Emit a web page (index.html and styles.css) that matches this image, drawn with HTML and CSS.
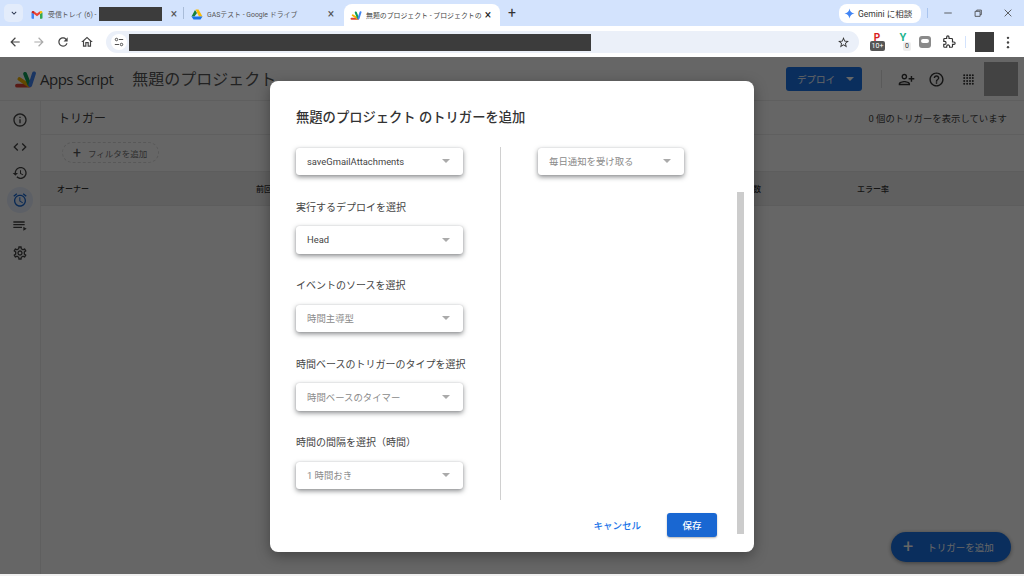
FILE: index.html
```html
<!DOCTYPE html>
<html lang="ja">
<head>
<meta charset="UTF-8">
<title>無題のプロジェクト - プロジェクトのトリガー</title>
<link rel="stylesheet" href="styles.css">
</head>
<body>
<svg class="defs" width="0" height="0">
<defs>
<symbol id="as-logo" viewBox="0 0 24 18">
<g fill="none" stroke-width="4" stroke-linecap="round">
<path stroke="#db4437" d="M3 15.5H16"/>
<path stroke="#f4b400" d="M5.5 8.5L15 15"/>
<path stroke="#0f9d58" d="M11.5 3L16 14"/>
<path stroke="#4285f4" d="M21 2.5L17 15"/>
</g>
</symbol>
<linearGradient id="gem" x1="0" y1="0" x2="1" y2="1">
<stop offset="0" stop-color="#ea4335"/>
<stop offset=".3" stop-color="#4285f4"/>
<stop offset=".7" stop-color="#4285f4"/>
<stop offset="1" stop-color="#fbbc04"/>
</linearGradient>
</defs>
</svg>

<div class="tabstrip">
<button class="tab-search"><svg width="10" height="10" viewBox="0 0 24 24"><path d="M7.4 8.6L12 13.2l4.6-4.6L18 10l-6 6-6-6z" fill="#1f2a44"/></svg></button>
<div class="tab tab-gmail">
<svg class="favicon" viewBox="0 0 24 18"><path fill="#4285f4" d="M1 5v11a1.500 1.500 0 0 0 1.500 1.500H6V8z"/><path fill="#34a853" d="M18 8v9.500h3.500A1.500 1.500 0 0 0 23 16V5z"/><path fill="#ea4335" d="M6 8V2.500L12 7l6-4.500V8l-6 4.500z"/><path fill="#c5221f" d="M1 5c0-3 3-4 5-2.500V8z"/><path fill="#fbbc04" d="M23 5c0-3-3-4-5-2.500V8z"/></svg>
<span class="tab-title">受信トレイ (6) -</span>
<span class="redact tab-redact"></span>
<span class="tab-close">×</span>
</div>
<span class="tab-sep"></span>
<div class="tab tab-drive">
<svg class="favicon" viewBox="0 0 24 22"><path fill="#188038" d="M8 2L1 15h6l5-7z"/><path fill="#fbbc04" d="M9 1h6l8 14h-7z"/><path fill="#1a73e8" d="M1 15h22l-4 6H5z"/></svg>
<span class="tab-title">GASテスト - Google ドライブ</span>
<span class="tab-close">×</span>
</div>
<div class="tab tab-active">
<svg class="favicon" viewBox="0 0 24 18"><use href="#as-logo"/></svg>
<span class="tab-title">無題のプロジェクト - プロジェクトの</span>
<span class="tab-close dark">×</span>
</div>
<span class="new-tab">+</span>
<div class="strip-right">
<div class="gemini">
<svg width="11" height="11" viewBox="0 0 24 24"><path fill="url(#gem)" d="M12 1c.6 6 5 10.400 11 11-6 .6-10.400 5-11 11-.6-6-5-10.400-11-11 6-.6 10.400-5 11-11z"/></svg>
<span>Gemini に相談</span>
</div>
<span class="strip-sep"></span>
<div class="win-btns">
<svg viewBox="0 0 12 12"><path d="M1.500 6h9" stroke="#444" stroke-width="1"/></svg>
<svg viewBox="0 0 12 12"><path d="M2.500 4h6v6h-6zM4.500 4V2.500h5.500V8H8.500" fill="none" stroke="#444" stroke-width="1"/></svg>
<svg viewBox="0 0 12 12"><path d="M2 2l8 8M10 2l-8 8" stroke="#444" stroke-width="1"/></svg>
</div>
</div>
</div>

<div class="toolbar">
<div class="nav-btns">
<svg viewBox="0 0 24 24"><path fill="#444" d="M20 11H7.830l5.590-5.590L12 4l-8 8 8 8 1.410-1.410L7.830 13H20v-2z"/></svg>
<svg viewBox="0 0 24 24"><path fill="#aaa" d="M12 4l-1.410 1.410L16.170 11H4v2h12.170l-5.580 5.590L12 20l8-8z"/></svg>
<svg viewBox="0 0 24 24"><path fill="#444" d="M17.650 6.350C16.200 4.900 14.210 4 12 4c-4.420 0-7.990 3.580-7.990 8s3.570 8 7.990 8c3.730 0 6.840-2.550 7.730-6h-2.080c-.82 2.330-3.040 4-5.650 4-3.310 0-6-2.690-6-6s2.690-6 6-6c1.660 0 3.140.69 4.220 1.780L13 11h7V4l-2.350 2.350z"/></svg>
<svg viewBox="0 0 24 24"><path fill="#444" d="M12 5.690l5 4.500V18h-2v-6H9v6H7v-7.810l5-4.500M12 3L2 12h3v8h6v-6h2v6h6v-8h3L12 3z"/></svg>
</div>
<div class="omnibox">
<span class="site-info"><svg width="10" height="10" viewBox="0 0 12 12"><g fill="none" stroke="#333" stroke-width="1"><circle cx="3" cy="3" r="1.500"/><path d="M6 3h5M1 9h5"/><circle cx="9" cy="9" r="1.500"/></g></svg></span>
<span class="redact url-redact"></span>
<svg class="star" viewBox="0 0 24 24"><path fill="#333" d="M22 9.240l-7.190-.62L12 2 9.190 8.630 2 9.240l5.460 4.730L5.820 21 12 17.270 18.180 21l-1.630-7.030L22 9.240zM12 15.400l-3.760 2.270 1-4.280-3.320-2.880 4.380-.38L12 6.100l1.710 4.040 4.380.38-3.320 2.880 1 4.280L12 15.400z"/></svg>
</div>
<div class="ext-btns">
<div class="ext ext-p"><span class="ext-letter">P</span><span class="badge">10+</span></div>
<div class="ext ext-y"><span class="ext-letter">Y</span><span class="badge light">0</span></div>
<div class="ext ext-line"><span class="line-bubble"></span></div>
<svg class="ext-puzzle" viewBox="0 0 24 24"><path fill="none" stroke="#333" stroke-width="2" d="M20.500 12H18V7.500c0-.8-.7-1.500-1.500-1.500H12V3.500a2 2 0 0 0-4 0V6H4.500C3.700 6 3 6.700 3 7.500V11h1.500a2.500 2.500 0 0 1 0 5H3v3.500c0 .8.700 1.500 1.500 1.500H8v-1.500a2.500 2.500 0 0 1 5 0V21h3.500c.8 0 1.500-.7 1.500-1.500V16h2.500a2 2 0 0 0 0-4z"/></svg>
</div>
<span class="tool-sep"></span>
<span class="redact profile"></span>
<svg class="kebab" viewBox="0 0 4 14"><circle cx="2" cy="2" r="1.300"/><circle cx="2" cy="7" r="1.300"/><circle cx="2" cy="12" r="1.300"/></svg>
</div>

<div class="app">
<header class="app-header">
<svg class="logo" viewBox="0 0 24 18"><use href="#as-logo"/></svg>
<span class="app-name">Apps Script</span>
<span class="project-name">無題のプロジェクト</span>
<div class="header-right">
<button class="deploy">デプロイ<span class="deploy-caret"></span></button>
<span class="header-sep"></span>
<svg class="hd-icon person" viewBox="0 0 24 24"><path fill="#333" transform="matrix(-1 0 0 1 24 0)" d="M15 12c2.210 0 4-1.790 4-4s-1.790-4-4-4-4 1.790-4 4 1.790 4 4 4zm0-6c1.100 0 2 .9 2 2s-.9 2-2 2-2-.9-2-2 .9-2 2-2zm0 8c-2.670 0-8 1.340-8 4v2h16v-2c0-2.660-5.330-4-8-4zm-6 4c.22-.72 3.310-2 6-2 2.700 0 5.800 1.290 6 2H9zm-3-3v-3h3v-2H6V7H4v3H1v2h3v3h2z"/></svg>
<svg class="hd-icon help" viewBox="0 0 24 24"><path fill="#333" d="M11 18h2v-2h-2v2zm1-16C6.480 2 2 6.480 2 12s4.480 10 10 10 10-4.480 10-10S17.520 2 12 2zm0 18c-4.410 0-8-3.590-8-8s3.590-8 8-8 8 3.590 8 8-3.590 8-8 8zm0-14c-2.210 0-4 1.790-4 4h2c0-1.100.9-2 2-2s2 .9 2 2c0 2-3 1.750-3 5h2c0-2.250 3-2.500 3-5 0-2.210-1.790-4-4-4z"/></svg>
<svg class="hd-icon grid" viewBox="0 0 11 11"><g fill="#333"><circle cx="1.200" cy="1.200" r="1"/><circle cx="4.100" cy="1.200" r="1"/><circle cx="7" cy="1.200" r="1"/><circle cx="9.800" cy="1.200" r="1"/><circle cx="1.200" cy="4.100" r="1"/><circle cx="4.100" cy="4.100" r="1"/><circle cx="7" cy="4.100" r="1"/><circle cx="9.800" cy="4.100" r="1"/><circle cx="1.200" cy="7" r="1"/><circle cx="4.100" cy="7" r="1"/><circle cx="7" cy="7" r="1"/><circle cx="9.800" cy="7" r="1"/><circle cx="1.200" cy="9.800" r="1"/><circle cx="4.100" cy="9.800" r="1"/><circle cx="7" cy="9.800" r="1"/><circle cx="9.800" cy="9.800" r="1"/></g></svg>
<span class="account"></span>
</div>
</header>
<div class="app-body">
<nav class="sidebar">
<span class="side-item"><svg viewBox="0 0 24 24"><path d="M11 7h2v2h-2zm0 4h2v6h-2zm1-9C6.480 2 2 6.480 2 12s4.480 10 10 10 10-4.480 10-10S17.520 2 12 2zm0 18c-4.410 0-8-3.590-8-8s3.590-8 8-8 8 3.590 8 8-3.590 8-8 8z"/></svg></span>
<span class="side-item"><svg viewBox="0 0 24 24"><path d="M9.400 16.600L4.800 12l4.600-4.600L8 6l-6 6 6 6 1.400-1.400zm5.200 0l4.600-4.600-4.600-4.600L16 6l6 6-6 6-1.400-1.400z"/></svg></span>
<span class="side-item"><svg viewBox="0 0 24 24"><path d="M13 3c-4.970 0-9 4.030-9 9H1l3.890 3.890.07.14L9 12H6c0-3.870 3.130-7 7-7s7 3.130 7 7-3.130 7-7 7c-1.930 0-3.680-.79-4.940-2.060l-1.420 1.420C8.270 19.990 10.510 21 13 21c4.970 0 9-4.030 9-9s-4.030-9-9-9zm-1 5v5l4.280 2.540.72-1.210-3.500-2.080V8H12z"/></svg></span>
<span class="side-item active"><svg viewBox="0 0 24 24"><path d="M22 5.720l-4.600-3.860-1.290 1.530 4.600 3.860L22 5.720zM7.880 3.390L6.600 1.860 2 5.710l1.290 1.530 4.590-3.850zM12.500 8H11v6l4.750 2.850.75-1.230-4-2.370V8zM12 4c-4.970 0-9 4.030-9 9s4.020 9 9 9c4.970 0 9-4.030 9-9s-4.030-9-9-9zm0 16c-3.870 0-7-3.130-7-7s3.130-7 7-7 7 3.130 7 7-3.130 7-7 7z"/></svg></span>
<span class="side-item"><svg viewBox="0 0 24 24"><path d="M19 9H2v2h17V9zm0-4H2v2h17V5zM2 15h13v-2H2v2zm15-2v6l5-3-5-3z"/></svg></span>
<span class="side-item"><svg viewBox="0 0 24 24"><path d="M19.430 12.980c.04-.32.07-.64.07-.98 0-.34-.03-.66-.07-.98l2.110-1.650c.19-.15.24-.42.12-.64l-2-3.460c-.09-.16-.26-.25-.44-.25-.06 0-.12.01-.17.03l-2.490 1c-.52-.4-1.080-.73-1.690-.98l-.38-2.650C14.460 2.180 14.250 2 14 2h-4c-.25 0-.46.18-.49.42l-.38 2.650c-.61.25-1.170.59-1.690.98l-2.490-1c-.06-.02-.12-.03-.18-.03-.17 0-.34.09-.43.25l-2 3.460c-.13.22-.07.49.12.64l2.110 1.650c-.04.32-.07.65-.07.98 0 .33.03.66.07.98l-2.110 1.650c-.19.15-.24.42-.12.64l2 3.460c.09.16.26.25.44.25.06 0 .12-.01.17-.03l2.490-1c.52.4 1.080.73 1.690.98l.38 2.650c.03.24.24.42.49.42h4c.25 0 .46-.18.49-.42l.38-2.650c.61-.25 1.170-.59 1.690-.98l2.490 1c.06.02.12.03.18.03.17 0 .34-.09.43-.25l2-3.460c.12-.22.07-.49-.12-.64l-2.110-1.650zm-1.980-1.710c.04.31.05.52.05.73 0 .21-.02.43-.05.73l-.14 1.130.89.7 1.080.84-.7 1.210-1.270-.51-1.040-.42-.9.68c-.43.32-.84.56-1.250.73l-1.060.43-.16 1.130-.2 1.350h-1.400l-.19-1.350-.16-1.130-1.060-.43c-.43-.18-.83-.41-1.230-.71l-.91-.7-1.060.43-1.270.51-.7-1.210 1.080-.84.89-.7-.14-1.130c-.03-.31-.05-.54-.05-.74s.02-.43.05-.73l.14-1.130-.89-.7-1.080-.84.7-1.210 1.270.51 1.040.42.9-.68c.43-.32.84-.56 1.250-.73l1.060-.43.16-1.130.2-1.350h1.390l.19 1.350.16 1.130 1.060.43c.43.18.83.41 1.230.71l.91.7 1.060-.43 1.270-.51.7 1.210-1.070.85-.89.7.14 1.130zM12 8c-2.210 0-4 1.790-4 4s1.790 4 4 4 4-1.790 4-4-1.790-4-4-4zm0 6c-1.100 0-2-.9-2-2s.9-2 2-2 2 .9 2 2-.9 2-2 2z"/></svg></span>
</nav>
<main class="main">
<div class="title-row">
<span class="page-title">トリガー</span>
<span class="count">0 個のトリガーを表示しています</span>
</div>
<div class="filter-row">
<span class="filter-chip"><span class="filter-plus">+</span>フィルタを追加</span>
</div>
<div class="table-head">
<span class="col col-owner">オーナー</span>
<span class="col col-last">前回の実行</span>
<span class="col col-count">実行回数</span>
<span class="col col-err">エラー率</span>
</div>
</main>
</div>
<button class="fab"><span class="fab-plus">+</span>トリガーを追加</button>

<div class="overlay">
<div class="modal">
<h2 class="modal-title">無題のプロジェクト のトリガーを追加</h2>
<div class="modal-body">
<div class="col-left">
<div class="select"><span>saveGmailAttachments</span><i class="caret"></i></div>
<label class="field-label">実行するデプロイを選択</label>
<div class="select"><span>Head</span><i class="caret"></i></div>
<label class="field-label">イベントのソースを選択</label>
<div class="select muted"><span>時間主導型</span><i class="caret"></i></div>
<label class="field-label">時間ベースのトリガーのタイプを選択</label>
<div class="select muted"><span>時間ベースのタイマー</span><i class="caret"></i></div>
<label class="field-label">時間の間隔を選択（時間）</label>
<div class="select muted"><span>1 時間おき</span><i class="caret"></i></div>
</div>
<div class="col-right">
<div class="select muted"><span>毎日通知を受け取る</span><i class="caret"></i></div>
</div>
</div>
<div class="modal-footer">
<button class="btn-cancel">キャンセル</button>
<button class="btn-save">保存</button>
</div>
<div class="scrollbar"></div>
</div>
</div>
</div>
</body>
</html>
```

FILE: styles.css
```css
* {
box-sizing: border-box;
}
html, body {
height: 100%;
}
body {
margin: 0;
width: 1024px;
height: 576px;
overflow: hidden;
background-color: #f1f1f1;
font-family: Roboto, "Noto Sans CJK JP", sans-serif;
color: #3c4043;
}
button {
font-family: inherit;
border: none;
cursor: pointer;
}
.defs {
position: absolute;
}
.redact {
display: block;
background-color: #3c3c3c;
}

/* browser chrome */
.tabstrip {
height: 26px;
background-color: #d3e3fd;
display: flex;
align-items: flex-end;
padding-left: 4px;
}
.tab-search {
width: 19px;
height: 18px;
margin: 0 7px 4px 0;
padding: 0;
border-radius: 5px;
background-color: #e3ecfb;
display: flex;
justify-content: center;
align-items: center;
}
.tab {
height: 22px;
display: flex;
align-items: center;
font-size: 6.900px;
color: #555;
white-space: nowrap;
}
.favicon {
width: 12px;
height: 11px;
flex: none;
}
.tab-title {
margin-left: 5px;
min-width: 0;
flex: 1;
}
.tab-gmail {
width: 150px;
padding-left: 1px;
margin-bottom: 1px;
}
.tab-gmail .tab-title {
flex: none;
margin-left: 5px;
}
.tab-redact {
width: 63px;
height: 14px;
margin-left: 3px;
}
.tab-close {
width: 12px;
text-align: center;
font-size: 12px;
color: #555;
line-height: 14px;
margin-left: auto;
}
.tab-close.dark {
color: #222;
}
.tab-sep {
width: 1px;
height: 12px;
margin: 0 7px 7px 3px;
background-color: #a9bcd8;
}
.tab-drive {
width: 146px;
margin-bottom: 1px;
}
.tab-drive .tab-title {
margin-left: 4px;
}
.tab-active {
width: 156px;
padding: 0 6px 0 6px;
margin-left: 7px;
background-color: #fff;
border-radius: 8px 8px 0 0;
color: #444;
}
.tab-active .tab-title {
margin-left: 4px;
}
.new-tab {
margin: 0 0 4px 8px;
font-size: 14px;
line-height: 18px;
color: #333;
}
.strip-right {
margin-left: auto;
display: flex;
align-items: center;
align-self: stretch;
}
.gemini {
width: 82px;
height: 19px;
border-radius: 8px;
background-color: #fff;
display: flex;
align-items: center;
gap: 3px;
padding-left: 5px;
font-size: 8.500px;
color: #333;
white-space: nowrap;
}
.strip-sep {
width: 1px;
height: 10px;
margin-left: 6px;
background-color: #a9c4ee;
}
.win-btns {
display: flex;
margin-left: 15px;
gap: 20px;
padding-right: 11px;
}
.win-btns svg {
width: 10px;
height: 10px;
}
.toolbar {
height: 32px;
background-color: #fff;
border-bottom: 1px solid #666;
display: flex;
align-items: center;
padding: 1px 0 0 8px;
}
.nav-btns {
display: flex;
gap: 10px;
width: 98px;
}
.nav-btns svg {
width: 14px;
height: 14px;
}
.omnibox {
width: 753px;
height: 22px;
border-radius: 11px;
background-color: #ebf0f9;
display: flex;
align-items: center;
padding-left: 5px;
}
.site-info {
width: 16px;
height: 16px;
border-radius: 50%;
background-color: #fff;
display: flex;
justify-content: center;
align-items: center;
}
.url-redact {
width: 462px;
height: 17px;
margin-left: 2px;
}
.star {
width: 13px;
height: 13px;
margin-left: 246px;
}
.ext-btns {
display: flex;
align-items: center;
margin-left: 9px;
}
.ext {
position: relative;
width: 18px;
height: 18px;
}
.ext-p {
margin-right: 8px;
}
.ext-y {
margin-right: 4px;
}
.ext-letter {
display: block;
text-align: center;
font-weight: 700;
font-size: 10px;
line-height: 7px;
}
.ext-p .ext-letter {
color: #d81e1e;
margin-top: 1px;
}
.ext-y .ext-letter {
color: #21b58f;
font-size: 11px;
line-height: 8px;
margin-top: 1px;
}
.badge {
position: absolute;
left: 2px;
top: 8px;
width: 15px;
height: 10px;
border-radius: 2px;
background-color: #555;
color: #fff;
font-size: 7px;
line-height: 10px;
text-align: center;
}
.badge.light {
left: 9px;
top: 9px;
width: 8px;
height: 9px;
background-color: #eee;
color: #333;
line-height: 9px;
}
.line-bubble {
display: block;
width: 12px;
height: 12px;
margin: 3px;
border-radius: 3px;
background-color: #8a8a8a;
position: relative;
}
.line-bubble::after {
content: "";
position: absolute;
left: 2px;
top: 3px;
width: 8px;
height: 4px;
border-radius: 2px;
background-color: #fff;
}
.ext-puzzle {
width: 14px;
height: 14px;
margin-left: 8px;
}
.tool-sep {
width: 1px;
height: 12px;
margin-left: 9px;
background-color: #d3e3fd;
}
.profile {
width: 19px;
height: 20px;
margin-left: 9px;
}
.kebab {
width: 4px;
height: 13px;
margin-left: 12px;
fill: #444;
}

/* apps script page under the dialog */
.app {
position: relative;
height: 516px;
background-color: #fff;
}
.app-header {
height: 43px;
border-bottom: 1px solid #eee;
display: flex;
align-items: center;
padding-left: 14px;
}
.logo {
width: 23px;
height: 17px;
}
.app-name {
margin-left: 3px;
font-family: "Open Sans", sans-serif;
font-size: 15px;
letter-spacing: -.5px;
color: #444;
}
.project-name {
margin-left: 19px;
margin-bottom: 2px;
font-size: 16px;
color: #555;
}
.header-right {
margin-left: auto;
display: flex;
align-items: center;
padding-right: 6px;
}
.deploy {
width: 76px;
height: 24px;
border-radius: 3px;
background-color: #1a73e8;
color: #fff;
font-size: 9.500px;
text-align: left;
padding: 0 0 0 11px;
display: flex;
align-items: center;
}
.deploy-caret {
margin-left: 11px;
border-left: 4px solid transparent;
border-right: 4px solid transparent;
border-top: 4px solid #fff;
}
.header-sep {
width: 1px;
height: 18px;
margin: 0 16px 0 19px;
background-color: #e0e0e0;
}
.hd-icon {
width: 17px;
height: 17px;
}
.help {
margin-left: 13px;
}
.grid {
width: 11px;
height: 11px;
margin-left: 18px;
}
.account {
width: 34px;
height: 34px;
margin-left: 10px;
background-color: #a8a8a8;
}
.app-body {
display: flex;
height: 473px;
}
.sidebar {
width: 41px;
border-right: 1px solid #eee;
display: flex;
flex-direction: column;
align-items: center;
padding-top: 6px;
gap: 0.6px;
}
.side-item {
width: 26px;
height: 26px;
border-radius: 50%;
display: flex;
justify-content: center;
align-items: center;
}
.side-item svg {
width: 16px;
height: 16px;
fill: #444;
}
.side-item.active {
background-color: #e8f0fe;
}
.side-item.active svg {
fill: #1967d2;
}
.main {
flex: 1;
}
.title-row {
height: 34px;
border-bottom: 1px solid #eee;
display: flex;
align-items: center;
justify-content: space-between;
padding: 0 17px 0 17px;
}
.page-title {
font-size: 12px;
color: #444;
}
.count {
font-size: 9.400px;
color: #444;
}
.filter-row {
height: 36px;
padding: 7px 0 0 21px;
}
.filter-chip {
width: 97px;
height: 21px;
border: 1px dashed #ddd;
border-radius: 11px;
display: flex;
align-items: center;
padding-left: 10px;
font-size: 8.500px;
color: #777;
}
.filter-plus {
font-size: 14px;
line-height: 14px;
margin-right: 7px;
color: #555;
}
.table-head {
height: 35px;
background-color: #f1f1f1;
border-top: 1px solid #e8e8e8;
border-bottom: 1px solid #e8e8e8;
display: flex;
align-items: center;
font-size: 8px;
font-weight: 500;
color: #333;
}
.col-owner {
margin-left: 16px;
width: 199px;
}
.col-last {
width: 473px;
}
.col-count {
width: 128px;
}
.fab {
position: absolute;
left: 891px;
top: 474px;
width: 120px;
height: 30px;
border-radius: 15px;
background-color: #1a73e8;
color: #fff;
font-size: 9.500px;
display: flex;
align-items: center;
padding: 0 0 0 12px;
box-shadow: 0 1px 4px rgba(0,0,0,.4);
}
.fab-plus {
font-size: 18px;
line-height: 18px;
margin-right: 14px;
}

/* dialog */
.overlay {
position: absolute;
inset: 0;
background-color: rgba(0,0,0,.6);
display: flex;
justify-content: center;
align-items: center;
}
.modal {
position: relative;
width: 484px;
height: 471px;
background-color: #fff;
border-radius: 8px;
padding: 27px 37px 15px 26px;
box-shadow: 0 4px 14px rgba(0,0,0,.35);
}
.modal-title {
margin: 0 0 19px;
font-size: 13.300px;
font-weight: 500;
line-height: 20px;
color: #333;
}
.modal-body {
display: flex;
height: 353px;
}
.col-left {
width: 205px;
padding-top: 1px;
border-right: 1px solid #d0d0d0;
}
.col-right {
padding: 1px 0 0 37px;
}
.col-right .select {
width: 146px;
}
.select {
width: 167px;
height: 27.500px;
border-radius: 3px;
background-color: #fff;
box-shadow: 0 2px 5px rgba(60,64,67,.6), 0 0 1px rgba(60,64,67,.3);
display: flex;
align-items: center;
justify-content: space-between;
padding: 0 13px 0 11px;
font-size: 9.400px;
color: #444;
}
.select.muted {
color: #8a8a8a;
}
.caret {
border-left: 4px solid transparent;
border-right: 4px solid transparent;
border-top: 4px solid #aaa;
}
.field-label {
display: block;
margin: 22.500px 0 8.500px;
font-size: 10px;
line-height: 20px;
color: #444;
}
.modal-footer {
display: flex;
justify-content: flex-end;
align-items: center;
margin-top: 13px;
}
.btn-cancel {
background: none;
padding: 0;
font-size: 9.500px;
font-weight: 500;
color: #1a73e8;
}
.btn-save {
width: 50px;
height: 24px;
margin-left: 26px;
border-radius: 3px;
background-color: #1967d2;
color: #fff;
font-size: 9.500px;
font-weight: 500;
box-shadow: 0 1px 2px rgba(0,0,0,.3);
}
.scrollbar {
position: absolute;
left: 467px;
top: 111px;
width: 7px;
height: 342px;
background-color: #ccc;
}
```
